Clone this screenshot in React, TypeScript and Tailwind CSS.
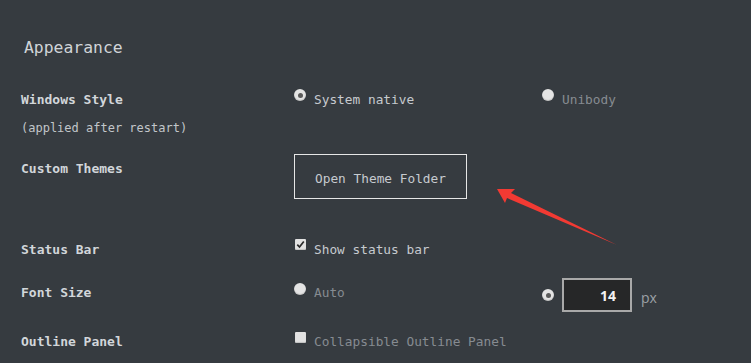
import React from "react";

function Radio({ checked }: { checked?: boolean }) {
  return (
    <span className="flex h-[12px] w-[12px] shrink-0 items-center justify-center rounded-full bg-[#e4e4e4] shadow-[inset_0_-1px_1px_rgba(0,0,0,0.15)]">
      {checked ? <span className="h-[5px] w-[5px] rounded-full bg-[#5a5a5a]" /> : null}
    </span>
  );
}

function Check({ checked }: { checked?: boolean }) {
  return (
    <span className="flex h-[11px] w-[11px] shrink-0 items-center justify-center rounded-[1px] bg-[#e2e2e2] shadow-[inset_0_-1px_1px_rgba(0,0,0,0.15)]">
      {checked ? (
        <svg width="9" height="9" viewBox="0 0 9 9">
          <path d="M1.3 4.6 L3.5 7 L7.8 1.4" fill="none" stroke="#2a2a2a" strokeWidth="1.7" />
        </svg>
      ) : null}
    </span>
  );
}

export default function App() {
  return (
    <div className="relative h-[363px] w-full overflow-hidden bg-[#363b40] font-['DejaVu_Sans_Mono',monospace] text-[12.8px] text-[#c6cacf]">
      <div className="pl-[24px] pt-[38px] text-[16.4px] leading-[20px] text-[#d0d4d8]">Appearance</div>

      {/* Windows Style */}
      <div className="mt-[33px] flex pl-[21px]">
        <div className="w-[273px]">
          <div className="text-[13px] font-bold leading-[18px] text-[#d2d6da]">Windows Style</div>
          <div className="mt-[11px] text-[12px] leading-[16px] text-[#c2c6ca]">(applied after restart)</div>
        </div>
        <div className="flex w-[248px] items-start gap-[8px]">
          <span className="mt-[-2px]"><Radio checked /></span>
          <span className="leading-[18px]">System native</span>
        </div>
        <div className="flex items-start gap-[8px]">
          <span className="mt-[-2px]"><Radio /></span>
          <span className="leading-[18px] text-[#868b91]">Unibody</span>
        </div>
      </div>

      {/* Custom Themes */}
      <div className="mt-[18px] flex pl-[21px]">
        <div className="w-[273px] pt-[6px] text-[13px] font-bold leading-[18px] text-[#d2d6da]">Custom Themes</div>
        <button className="flex h-[45px] w-[173px] items-center justify-center border border-[#e6e6e6] pt-[4px] text-[12.8px] text-[#c6cacf]">
          Open Theme Folder
        </button>
      </div>

      {/* Status Bar */}
      <div className="mt-[42px] flex pl-[21px]">
        <div className="w-[273px] text-[13px] font-bold leading-[18px] text-[#d2d6da]">Status Bar</div>
        <div className="flex items-start gap-[8px] pl-[1px]">
          <span className="mt-[-2px]"><Check checked /></span>
          <span className="leading-[18px]">Show status bar</span>
        </div>
      </div>

      {/* Font Size */}
      <div className="mt-[19px] flex pl-[21px]">
        <div className="w-[273px] pt-[6px] text-[13px] font-bold leading-[18px] text-[#d2d6da]">Font Size</div>
        <div className="flex w-[248px] items-start gap-[8px] pt-[6px]">
          <span className="mt-[-1px]"><Radio /></span>
          <span className="leading-[18px] text-[#868b91]">Auto</span>
        </div>
        <div className="flex items-center">
          <Radio checked />
          <div className="ml-[8px] flex h-[34px] w-[70px] items-center justify-end border-2 border-[#a9a9a9] bg-[#262728] pr-[14px] font-['Open_Sans',sans-serif] text-[14px] font-bold text-[#f2f2f2]">
            14
          </div>
          <span className="ml-[9px] mt-[4px] font-['Open_Sans',sans-serif] text-[14px] text-[#9ca1a6]">px</span>
        </div>
      </div>

      {/* Outline Panel */}
      <div className="mt-[21px] flex pl-[21px]">
        <div className="w-[273px] text-[13px] font-bold leading-[18px] text-[#d2d6da]">Outline Panel</div>
        <div className="flex items-start gap-[8px] pl-[1px]">
          <span className="mt-[-1px]"><Check /></span>
          <span className="leading-[18px] text-[#868b91]">Collapsible Outline Panel</span>
        </div>
      </div>

      <svg className="pointer-events-none absolute left-0 top-0" width="751" height="363" viewBox="0 0 751 363">
        <polygon points="497,189 515,189 511,193 617,245 507,198 505,203" fill="#f23a33" />
      </svg>
    </div>
  );
}
